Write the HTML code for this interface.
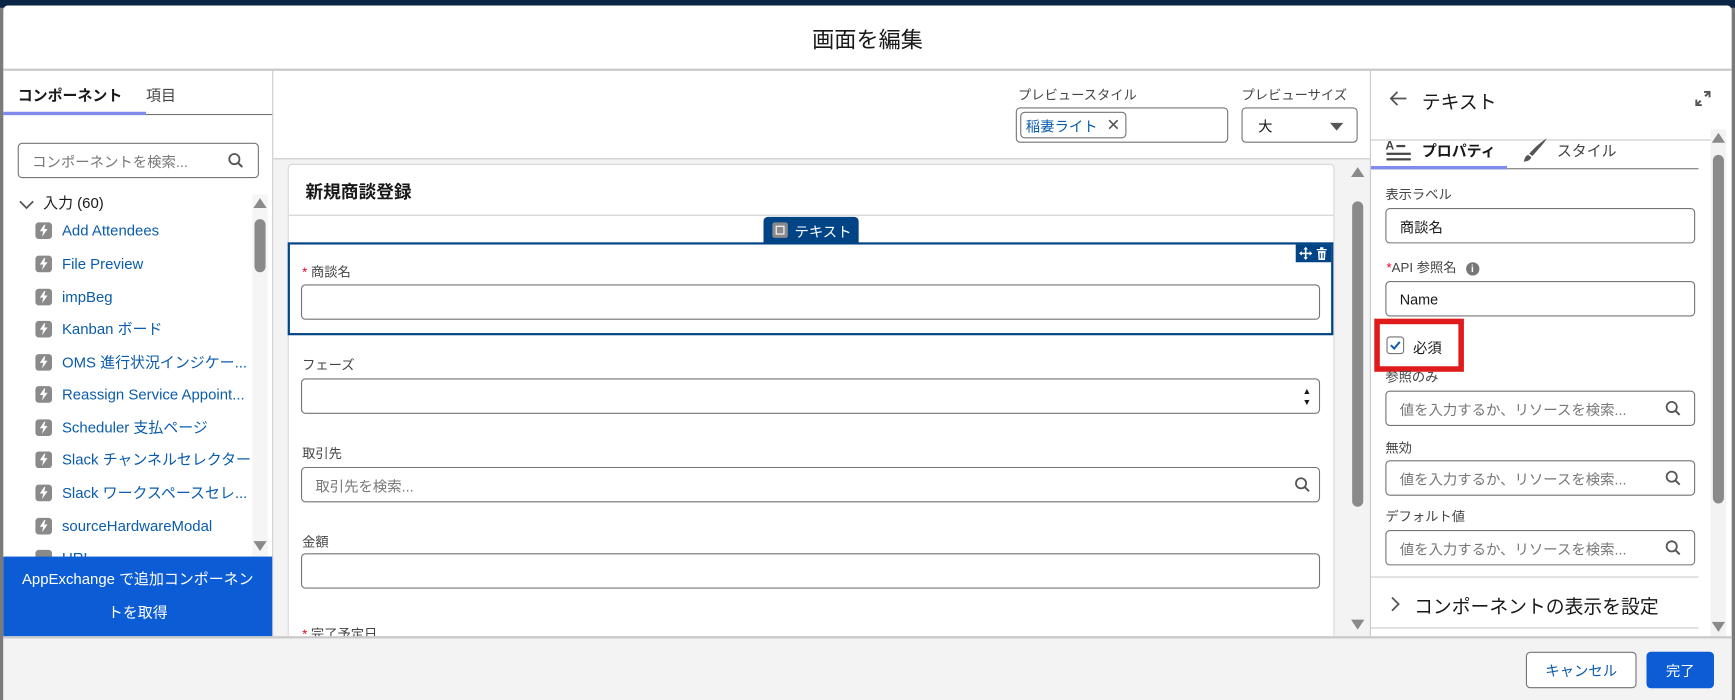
<!DOCTYPE html>
<html><head><meta charset="utf-8"><style>
*{box-sizing:border-box;margin:0;padding:0}
html,body{width:1735px;height:700px;overflow:hidden;background:#8a8a8a}
body{font-family:"Liberation Sans","Noto Sans CJK JP",sans-serif;color:#181818}
#s{position:absolute;left:0;top:0;width:1568px;height:633px;transform:scale(1.10651);transform-origin:0 0;background:#7a7a7a}
.a{position:absolute}
.inp{position:absolute;border:1px solid #747474;border-radius:4px;background:#fff;font-size:13px;display:flex;align-items:center;padding-left:12px}
.lbl{position:absolute;font-size:12px;color:#444;line-height:14px}
.ph{color:#777}
.it{position:absolute;left:32px;height:16px;line-height:16px;font-size:13.5px;color:#0b5cab;white-space:nowrap}
.ic{position:absolute;left:0;top:0;width:15px;height:15px;border-radius:3px;background:#8a8a8a}
.ic svg{position:absolute;left:3px;top:2px}
.it span.t{position:absolute;left:24px;top:0}
.sb{position:absolute;width:14px}
.up{width:0;height:0;border-left:6px solid transparent;border-right:6px solid transparent;border-bottom:9px solid #8a8a8a;position:absolute;left:1px}
.dn{width:0;height:0;border-left:6px solid transparent;border-right:6px solid transparent;border-top:9px solid #8a8a8a;position:absolute;left:1px}
.th{position:absolute;left:2px;width:10px;background:#8a8a8a;border-radius:5px}
.req{color:#ea001e}
</style></head><body><div id="s">
<div class="a" style="left:0;top:0;width:1568px;height:7px;background:#0b2545"></div>
<div class="a" style="left:3px;top:5px;width:1562px;height:628px;background:#fff;border-radius:4px 4px 0 0"></div>
<div class="a" style="left:3px;top:5px;width:1562px;height:58px;display:flex;align-items:center;justify-content:center;font-size:20px">画面を編集</div>
<div class="a" style="left:3px;top:62px;width:1562px;height:2px;background:#c9c9c9"></div>

<!-- left panel -->
<div class="a" style="left:246px;top:64px;width:1px;height:512px;background:#c9c9c9"></div>
<div class="a" style="left:16px;top:75px;font-size:13.5px;font-weight:bold">コンポーネント</div>
<div class="a" style="left:132px;top:75px;font-size:13.5px;color:#444">項目</div>
<div class="a" style="left:3px;top:103px;width:243px;height:1px;background:#747474"></div>
<div class="a" style="left:3px;top:101px;width:129px;height:3px;background:#7f8ced"></div>
<div class="inp ph" style="left:16px;top:129px;width:218px;height:32px;font-size:13px">コンポーネントを検索...</div>
<svg class="a" style="left:206px;top:138px" width="14" height="14" viewBox="0 0 14 14"><circle cx="5.8" cy="5.8" r="4.6" fill="none" stroke="#555" stroke-width="1.6"/><line x1="9.2" y1="9.2" x2="13" y2="13" stroke="#555" stroke-width="1.8"/></svg>
<svg class="a" style="left:17px;top:180px" width="14" height="10" viewBox="0 0 14 10"><path d="M1 2l6 6 6-6" fill="none" stroke="#555" stroke-width="1.5"/></svg>
<div class="a" style="left:39px;top:176px;font-size:13.5px;line-height:16px;color:#181818">入力 (60)</div>
<div class="it" style="top:201px"><span class="ic"><svg width="9" height="11" viewBox="0 0 9 11"><path d="M5 0L1 6h3l-1 5 5-7H5l1-4z" fill="#fff"/></svg></span><span class="t">Add Attendees</span></div>
<div class="it" style="top:231px"><span class="ic"><svg width="9" height="11" viewBox="0 0 9 11"><path d="M5 0L1 6h3l-1 5 5-7H5l1-4z" fill="#fff"/></svg></span><span class="t">File Preview</span></div>
<div class="it" style="top:261px"><span class="ic"><svg width="9" height="11" viewBox="0 0 9 11"><path d="M5 0L1 6h3l-1 5 5-7H5l1-4z" fill="#fff"/></svg></span><span class="t">impBeg</span></div>
<div class="it" style="top:290px"><span class="ic"><svg width="9" height="11" viewBox="0 0 9 11"><path d="M5 0L1 6h3l-1 5 5-7H5l1-4z" fill="#fff"/></svg></span><span class="t">Kanban ボード</span></div>
<div class="it" style="top:320px"><span class="ic"><svg width="9" height="11" viewBox="0 0 9 11"><path d="M5 0L1 6h3l-1 5 5-7H5l1-4z" fill="#fff"/></svg></span><span class="t">OMS 進行状況インジケー...</span></div>
<div class="it" style="top:349px"><span class="ic"><svg width="9" height="11" viewBox="0 0 9 11"><path d="M5 0L1 6h3l-1 5 5-7H5l1-4z" fill="#fff"/></svg></span><span class="t">Reassign Service Appoint...</span></div>
<div class="it" style="top:379px"><span class="ic"><svg width="9" height="11" viewBox="0 0 9 11"><path d="M5 0L1 6h3l-1 5 5-7H5l1-4z" fill="#fff"/></svg></span><span class="t">Scheduler 支払ページ</span></div>
<div class="it" style="top:408px"><span class="ic"><svg width="9" height="11" viewBox="0 0 9 11"><path d="M5 0L1 6h3l-1 5 5-7H5l1-4z" fill="#fff"/></svg></span><span class="t">Slack チャンネルセレクター</span></div>
<div class="it" style="top:438px"><span class="ic"><svg width="9" height="11" viewBox="0 0 9 11"><path d="M5 0L1 6h3l-1 5 5-7H5l1-4z" fill="#fff"/></svg></span><span class="t">Slack ワークスペースセレ...</span></div>
<div class="it" style="top:468px"><span class="ic"><svg width="9" height="11" viewBox="0 0 9 11"><path d="M5 0L1 6h3l-1 5 5-7H5l1-4z" fill="#fff"/></svg></span><span class="t">sourceHardwareModal</span></div>
<div class="it" style="top:497px"><span class="ic"></span><span class="t">URL</span></div>
<div class="sb" style="left:228px;top:176px;height:330px;background:#f5f5f5"><div class="up" style="top:3px"></div><div class="th" style="top:22px;height:48px"></div><div class="dn" style="top:313px"></div></div>
<div class="a" style="left:3px;top:503px;width:243px;height:73px;background:#0b5cd5;color:#fff;font-size:13.5px;text-align:center;line-height:30px;padding-top:6px">AppExchange で追加コンポーネン<br>トを取得</div>

<!-- center -->
<div class="a" style="left:247px;top:143px;width:991px;height:433px;background:#f3f3f3;border-top:1px solid #c9c9c9"></div>
<div class="lbl" style="left:920px;top:79px">プレビュースタイル</div>
<div class="inp" style="left:918px;top:97px;width:192px;height:32px;padding-left:3px"><div style="border:1px solid #747474;border-radius:4px;height:24px;padding:0 4px;display:flex;align-items:center;color:#0b5cab;font-size:13px">稲妻ライト<span style="color:#555;margin-left:8px;font-size:15px">✕</span></div></div>
<div class="lbl" style="left:1122px;top:79px">プレビューサイズ</div>
<div class="inp" style="left:1122px;top:97px;width:105px;height:32px;padding-left:14px">大<div style="position:absolute;right:12px;top:13px;border-left:6px solid transparent;border-right:6px solid transparent;border-top:7px solid #555"></div></div>

<div class="a" style="left:260px;top:148px;width:946px;height:428px;background:#fff;border:1px solid #d8d8d8;border-radius:4px 4px 0 0"></div>
<div class="a" style="left:276px;top:160px;font-size:16px;font-weight:bold">新規商談登録</div>
<div class="a" style="left:261px;top:194px;width:944px;height:1px;background:#d0d0d0"></div>
<div class="a" style="left:690px;top:196px;width:86px;height:24px;background:#014486;border-radius:4px 4px 0 0;color:#fff;font-size:13px;display:flex;align-items:center;padding-left:8px"><span style="width:14px;height:14px;background:#8a8a8a;border-radius:2px;margin-right:6px;display:inline-flex;align-items:center;justify-content:center"><span style="width:8px;height:8px;border:1.5px solid #fff"></span></span>テキスト</div>
<div class="a" style="left:260px;top:219px;width:945px;height:84px;border:2px solid #014486"></div>
<div class="a" style="left:1171px;top:221px;width:32px;height:16px;background:#014486"></div>
<svg class="a" style="left:1174px;top:223px" width="12" height="12" viewBox="0 0 12 12"><path d="M6 0L4 2.5h1.3V5.3H2.5V4L0 6l2.5 2V6.7h2.8v2.8H4L6 12l2-2.5H6.7V6.7h2.8V8L12 6 9.5 4v1.3H6.7V2.5H8z" fill="#fff"/></svg>
<svg class="a" style="left:1189px;top:223px" width="11" height="12" viewBox="0 0 11 12"><path d="M1 2h9v1.2H1zM4 0.5h3V2H4zM2 4h7l-.6 8H2.6z" fill="#fff"/><path d="M4.2 5.5v5M6.8 5.5v5" stroke="#014486" stroke-width="1"/></svg>
<div class="lbl" style="left:273px;top:239px"><span class="req">*</span> 商談名</div>
<div class="inp" style="left:272px;top:257px;width:921px;height:32px"></div>
<div class="lbl" style="left:273px;top:323px">フェーズ</div>
<div class="inp" style="left:272px;top:342px;width:921px;height:32px"><div style="position:absolute;right:7px;top:6px;font-size:8px;line-height:10px;color:#181818">▲<br>▼</div></div>
<div class="lbl" style="left:273px;top:403px">取引先</div>
<div class="inp ph" style="left:272px;top:422px;width:921px;height:32px">取引先を検索...</div>
<svg class="a" style="left:1170px;top:431px" width="14" height="14" viewBox="0 0 14 14"><circle cx="5.8" cy="5.8" r="4.6" fill="none" stroke="#555" stroke-width="1.6"/><line x1="9.2" y1="9.2" x2="13" y2="13" stroke="#555" stroke-width="1.8"/></svg>
<div class="lbl" style="left:273px;top:483px">金額</div>
<div class="inp" style="left:272px;top:500px;width:921px;height:32px"></div>
<div class="lbl" style="left:273px;top:566px"><span class="req">*</span> 完了予定日</div>
<div class="sb" style="left:1220px;top:148px;height:428px;background:#f3f3f3"><div class="up" style="top:3px"></div><div class="th" style="top:34px;height:276px"></div><div class="dn" style="top:412px"></div></div>

<!-- right panel -->
<div class="a" style="left:1238px;top:64px;width:1px;height:512px;background:#c9c9c9"></div>
<svg class="a" style="left:1256px;top:82px" width="16" height="14" viewBox="0 0 16 14"><path d="M7 1L1 7l6 6M1 7h14" fill="none" stroke="#555" stroke-width="1.6"/></svg>
<div class="a" style="left:1285px;top:78px;font-size:17px">テキスト</div>
<svg class="a" style="left:1532px;top:82px" width="14" height="14" viewBox="0 0 14 14"><path d="M8 1h5v5M13 1L9 5M6 13H1V8M1 13l4-4" fill="none" stroke="#555" stroke-width="1.8"/></svg>
<div class="a" style="left:1239px;top:126px;width:309px;height:1px;background:#c9c9c9"></div>
<svg class="a" style="left:1252px;top:125px" width="25" height="22" viewBox="0 0 25 22"><text x="0" y="10" font-family="Liberation Sans" font-size="11" font-weight="bold" fill="#444">A</text><rect x="10" y="6" width="8" height="2" fill="#444"/><rect x="1" y="13" width="22" height="2" fill="#444"/><rect x="1" y="18" width="22" height="2" fill="#444"/></svg>
<div class="a" style="left:1285px;top:125px;font-size:13.5px;font-weight:bold">プロパティ</div>
<svg class="a" style="left:1374px;top:123px" width="26" height="24" viewBox="0 0 26 24"><path d="M24 2C19 5 12 11 8 16l3 2C15 13 21 7 24 2z" fill="#555"/><path d="M7 17l3 2c-1 3-4 4-7 4 1-2 1-5 4-6z" fill="#555"/></svg>
<div class="a" style="left:1407px;top:125px;font-size:13.5px;color:#444">スタイル</div>
<div class="a" style="left:1239px;top:152px;width:296px;height:1px;background:#747474"></div>
<div class="a" style="left:1239px;top:150px;width:123px;height:3px;background:#7f8ced"></div>

<div class="lbl" style="left:1252px;top:169px">表示ラベル</div>
<div class="inp" style="left:1252px;top:188px;width:280px;height:32px">商談名</div>
<div class="lbl" style="left:1253px;top:235px"><span class="req">*</span>API 参照名 <span style="display:inline-block;width:12px;height:12px;border-radius:6px;background:#777;color:#fff;font-size:9px;text-align:center;line-height:12px;margin-left:5px;font-weight:bold">i</span></div>
<div class="inp" style="left:1252px;top:254px;width:280px;height:32px">Name</div>
<div class="a" style="left:1242px;top:288px;width:81px;height:48px;border:5px solid #e01b1b"></div>
<div class="a" style="left:1253px;top:304px;width:16px;height:16px;border:1px solid #747474;border-radius:3px;background:#fff"><svg width="14" height="14" viewBox="0 0 14 14" style="position:absolute;left:0;top:0"><path d="M3 7l3 3 5-6" fill="none" stroke="#0b5cab" stroke-width="1.8"/></svg></div>
<div class="a" style="left:1277px;top:304px;font-size:13px">必須</div>
<div class="lbl" style="left:1252px;top:334px">参照のみ</div>
<div class="inp ph" style="left:1252px;top:353px;width:280px;height:32px">値を入力するか、リソースを検索...</div>
<div class="lbl" style="left:1252px;top:398px">無効</div>
<div class="inp ph" style="left:1252px;top:416px;width:280px;height:32px">値を入力するか、リソースを検索...</div>
<div class="lbl" style="left:1252px;top:460px">デフォルト値</div>
<div class="inp ph" style="left:1252px;top:479px;width:280px;height:32px">値を入力するか、リソースを検索...</div>
<svg class="a" style="left:1505px;top:362px" width="14" height="14" viewBox="0 0 14 14"><circle cx="5.8" cy="5.8" r="4.6" fill="none" stroke="#555" stroke-width="1.6"/><line x1="9.2" y1="9.2" x2="13" y2="13" stroke="#555" stroke-width="1.8"/></svg>
<svg class="a" style="left:1505px;top:425px" width="14" height="14" viewBox="0 0 14 14"><circle cx="5.8" cy="5.8" r="4.6" fill="none" stroke="#555" stroke-width="1.6"/><line x1="9.2" y1="9.2" x2="13" y2="13" stroke="#555" stroke-width="1.8"/></svg>
<svg class="a" style="left:1505px;top:488px" width="14" height="14" viewBox="0 0 14 14"><circle cx="5.8" cy="5.8" r="4.6" fill="none" stroke="#555" stroke-width="1.6"/><line x1="9.2" y1="9.2" x2="13" y2="13" stroke="#555" stroke-width="1.8"/></svg>
<div class="a" style="left:1239px;top:521px;width:296px;height:1px;background:#c9c9c9"></div>
<svg class="a" style="left:1256px;top:538px" width="10" height="16" viewBox="0 0 10 16"><path d="M2 2l6 6-6 6" fill="none" stroke="#555" stroke-width="1.6"/></svg>
<div class="a" style="left:1278px;top:534px;font-size:17px">コンポーネントの表示を設定</div>
<div class="a" style="left:1239px;top:567px;width:296px;height:1px;background:#c9c9c9"></div>
<div class="sb" style="left:1546px;top:117px;height:459px;background:#f3f3f3"><div class="up" style="top:3px"></div><div class="th" style="top:23px;height:315px"></div><div class="dn" style="top:445px"></div></div>

<!-- footer -->
<div class="a" style="left:3px;top:575px;width:1562px;height:58px;background:#f3f3f3;border-top:2px solid #c9c9c9"></div>
<div class="a" style="left:1379px;top:589px;width:100px;height:33px;background:#fff;border:1px solid #747474;border-radius:4px;color:#0b5cab;font-size:13px;display:flex;align-items:center;justify-content:center">キャンセル</div>
<div class="a" style="left:1488px;top:589px;width:61px;height:33px;background:#0b5cd5;border-radius:4px;color:#fff;font-size:13px;display:flex;align-items:center;justify-content:center">完了</div>
</div></body></html>
